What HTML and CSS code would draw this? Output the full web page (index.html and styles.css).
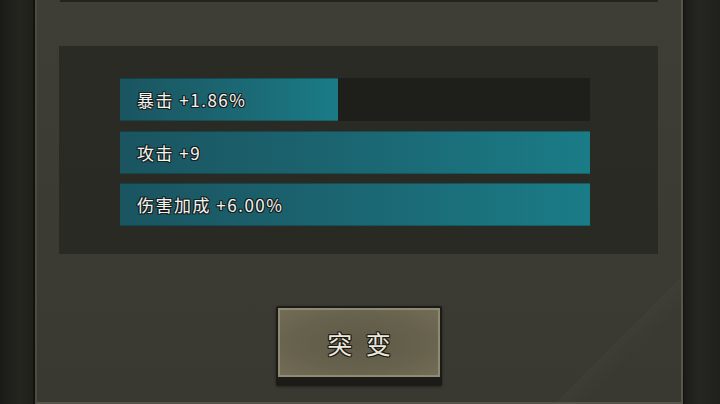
FILE: index.html
```html
<!DOCTYPE html>
<html lang="zh">
<head>
<meta charset="utf-8">
<title>突变</title>
<link rel="stylesheet" href="styles.css">
</head>
<body>
<div class="screen">
  <div class="side side-left"></div>
  <div class="panel">
    <div class="top-edge"></div>
    <div class="stats">
      <div class="bar"><div class="fill" style="width:46.4%"></div><span class="label">暴击 +1.86%</span></div>
      <div class="bar"><div class="fill" style="width:100%"></div><span class="label">攻击 +9</span></div>
      <div class="bar"><div class="fill" style="width:100%"></div><span class="label">伤害加成 +6.00%</span></div>
    </div>
    <div class="actions">
      <button class="btn"><span class="btn-inner">突 变</span></button>
    </div>
  </div>
  <div class="side side-right"></div>
</div>
</body>
</html>
```
FILE: styles.css
```css
html, body {
  margin: 0;
  padding: 0;
  width: 720px;
  height: 404px;
  overflow: hidden;
  background: #22221e;
}
.screen {
  display: flex;
  width: 720px;
  height: 404px;
}
.side {
  height: 404px;
}
.side-left {
  width: 33px;
  background: linear-gradient(90deg, #1a1a17 0%, #25251f 60%, #1f1f1b 100%);
  border-right: 2px solid #121210;
}
.side-right {
  width: 36px;
  background: linear-gradient(90deg, #1b1b18 0%, #262621 40%, #20201c 100%);
  border-left: 1px solid #131311;
}
.panel {
  flex: 1;
  box-sizing: border-box;
  height: 404px;
  background:
    linear-gradient(135deg, transparent 88%, rgba(255,255,240,0.018) 88.2%, transparent 91%),
    linear-gradient(180deg, #3e3e36 0%, #3b3b33 60%, #393932 100%);
  border-left: 2px solid #4b4b42;
  border-right: 2px solid #57574d;
  border-bottom: 2px solid #55554c;
  display: flex;
  flex-direction: column;
  padding: 0 23px 0 22px;
}
.top-edge {
  height: 2px;
  margin-left: 1px;
  background: #23231f;
}
.stats {
  margin-top: 44px;
  box-sizing: border-box;
  height: 208px;
  background: linear-gradient(180deg, #2b2b26 0%, #2a2a25 100%);
  padding: 32px 68px 0 61px;
  display: flex;
  flex-direction: column;
  gap: 9.5px;
}
.bar {
  position: relative;
  height: 43px;
  background: #1e1e1b;
  display: flex;
  align-items: center;
}
.fill {
  position: absolute;
  left: 0;
  top: 0;
  bottom: 0;
  background: linear-gradient(90deg, #1a5560 0%, #1b6470 45%, #1a7c87 100%);
  box-shadow: inset 0 1px 0 rgba(0,0,0,0.25), inset 0 -1px 0 rgba(0,0,0,0.2);
}
.label {
  position: relative;
  padding-left: 17px;
  font-family: "Noto Sans CJK SC", "Noto Sans", sans-serif;
  font-size: 17px;
  letter-spacing: 1.5px;
  color: #f2f4f0;
  text-shadow:
    1px 0 0 #182020, -1px 0 0 #182020, 0 1px 0 #182020, 0 -1px 0 #182020,
    1px 1px 0 #182020, -1px -1px 0 #182020, 1px -1px 0 #182020, -1px 1px 0 #182020;
  line-height: 1;
}
.actions {
  margin-top: 52px;
  display: flex;
  justify-content: center;
}
.btn {
  box-sizing: border-box;
  width: 166px;
  height: 80px;
  margin: 0 0 0 1px;
  padding: 2px 2px 9px 2px;
  border: 0;
  border-radius: 2px;
  background: #1c1b17;
  box-shadow: 0 1px 3px rgba(0,0,0,0.4);
  display: flex;
}
.btn-inner {
  flex: 1;
  display: flex;
  align-items: center;
  justify-content: center;
  border: 2px solid #8e8a74;
  background: radial-gradient(ellipse at 50% 50%, #5f5a47 0%, #67624d 60%, #736d56 100%);
  font-family: "Noto Sans CJK SC", sans-serif;
  font-size: 25px;
  letter-spacing: 4px;
  padding-left: 4px;
  color: #ebe8dc;
  text-shadow:
    1px 0 0 #1d1b16, -1px 0 0 #1d1b16, 0 1px 0 #1d1b16, 0 -1px 0 #1d1b16,
    1px 1px 0 #1d1b16, -1px -1px 0 #1d1b16, 1px -1px 0 #1d1b16, -1px 1px 0 #1d1b16;
}
```
